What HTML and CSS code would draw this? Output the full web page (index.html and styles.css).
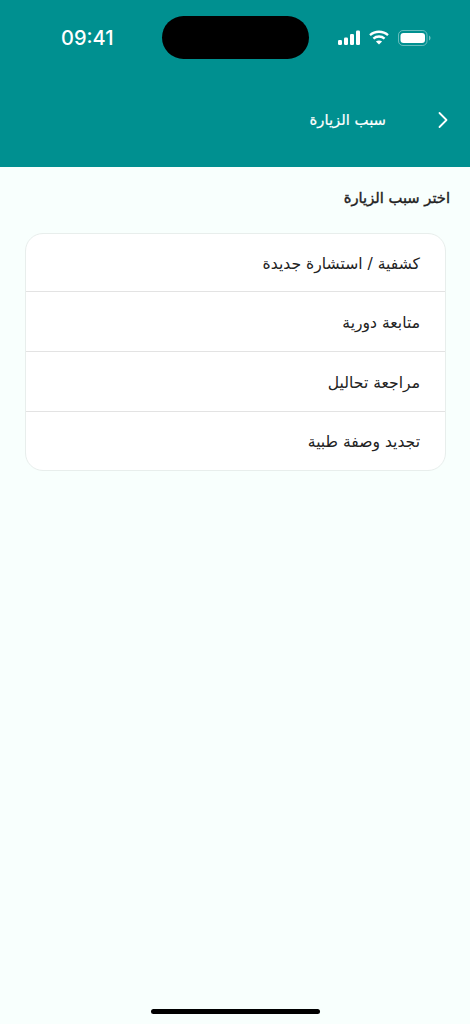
FILE: index.html
```html
<!DOCTYPE html>
<html lang="ar">
<head>
<meta charset="utf-8">
<title>سبب الزيارة</title>
<link rel="stylesheet" href="styles.css">
</head>
<body>
<div class="screen">
  <header class="header">
    <div class="status" dir="ltr">
      <span class="time">09:41</span>
      <span class="island"></span>
      <span class="status-icons">
        <svg width="24" height="15" viewBox="0 0 24 15" fill="#fff"><rect x="1" y="10" width="4" height="5" rx="1.2"/><rect x="7" y="7.500" width="4" height="7.500" rx="1.2"/><rect x="13" y="4" width="4" height="11" rx="1.2"/><rect x="19" y="0.500" width="4" height="14.500" rx="1.2"/></svg>
        <svg width="20" height="15" viewBox="0 0 20 15" fill="none" stroke="#fff" stroke-width="2.3"><path d="M1 5.200C6 .6 14 .6 19 5.200"/><path d="M4.400 8.600C7.500 5.800 12.500 5.800 15.600 8.600"/><path d="M10 14.600L6.900 11.600C8.700 10.100 11.300 10.100 13.100 11.600Z" fill="#fff" stroke="none"/></svg>
        <svg class="batt" width="33" height="16" viewBox="0 0 33 16"><rect x="0.500" y="0.500" width="28.500" height="15" rx="4.500" fill="none" stroke="#fff" stroke-opacity=".4"/><rect x="2.500" y="3" width="24.500" height="10" rx="3" fill="#fff"/><path d="M31 5.500C32 6 32.500 7 32.500 8S32 10 31 10.500Z" fill="#fff" fill-opacity=".45"/></svg>
      </span>
    </div>
    <div class="nav" dir="ltr">
      <h1 class="title" dir="rtl">سبب الزيارة</h1>
      <svg class="back" width="12" height="18" viewBox="0 0 12 18" fill="none" stroke="#fff" stroke-width="1.8" stroke-linecap="round" stroke-linejoin="round"><path d="M2.500 2L9.500 9L2.500 16"/></svg>
    </div>
  </header>
  <main class="content" dir="rtl">
    <h2 class="heading">اختر سبب الزيارة</h2>
    <ul class="card">
      <li class="row">كشفية / استشارة جديدة</li>
      <li class="row">متابعة دورية</li>
      <li class="row">مراجعة تحاليل</li>
      <li class="row">تجديد وصفة طبية</li>
    </ul>
  </main>
  <div class="home-bar"></div>
</div>
</body>
</html>
```

FILE: styles.css
```css
* { box-sizing: border-box; }
html, body { margin: 0; padding: 0; }
body { background: #f8fffd; font-family: "DejaVu Sans", sans-serif; }
.screen { width: 470px; height: 1024px; display: flex; flex-direction: column; overflow: hidden; }
.header { height: 167px; background: #009090; display: flex; flex-direction: column; color: #fff; }
.status { display: flex; align-items: center; height: 43px; margin-top: 16px; padding-left: 61px; }
.time { font-family: Inter, sans-serif; font-size: 20px; font-weight: 500; line-height: 44px; width: 101px; }
.island { width: 147px; height: 43px; background: #000; border-radius: 22px; }
.status-icons { display: flex; align-items: center; gap: 8px; margin-left: 28px; }
.batt { margin-left: 1px; }
.nav { display: flex; align-items: center; justify-content: flex-end; height: 44px; margin-top: 39px; padding-right: 21px; }
.back { margin-left: 51px; }
.title { margin: 0 0 2px; font-size: 14.800px; font-weight: 400; -webkit-text-stroke: .2px #fff; }
.content { padding: 21px 20px 0 24px; flex: 1; }
.heading { margin: 0 0 25px; font-size: 14.700px; line-height: 20px; font-weight: 400; color: #222; -webkit-text-stroke: .4px #222; }
.card { list-style: none; margin: 0 4px 0 0; padding: 0; width: 421px; height: 238px; background: #fff; border: 1px solid #e8eeec; border-radius: 18px; }
.row { height: 60px; padding: 2px 25px 0; display: flex; align-items: center; font-size: 15.600px; color: #222; border-bottom: 1px solid #e3e3e3; }
.row:first-child { height: 58px; }
.row:last-child { height: 58px; border-bottom: 0; }
.home-bar { width: 169px; height: 5px; border-radius: 3px; background: #000; margin: 0 auto 10px; }
```
